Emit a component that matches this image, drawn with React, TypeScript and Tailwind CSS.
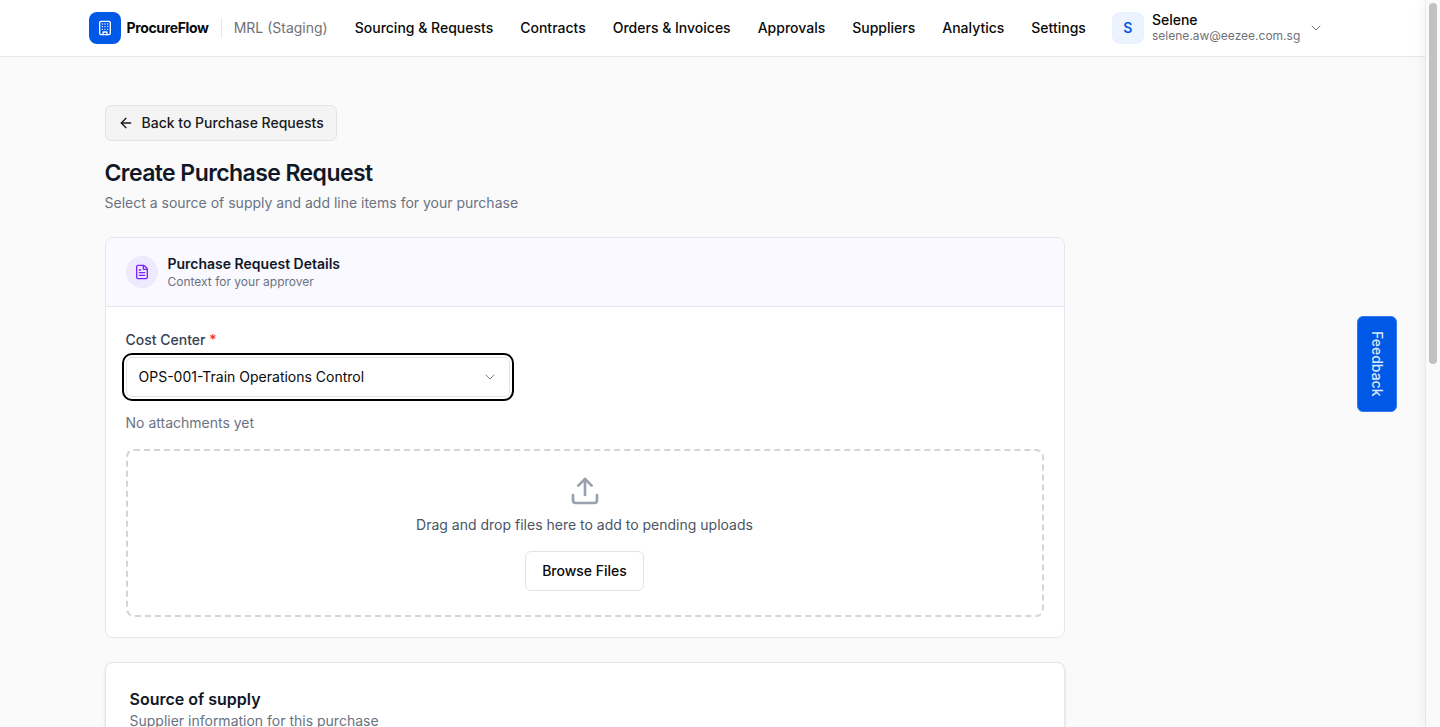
import { ArrowLeft, Building, ChevronDown, FileText, Upload } from 'lucide-react'

const navItems = [
  'Sourcing & Requests',
  'Contracts',
  'Orders & Invoices',
  'Approvals',
  'Suppliers',
  'Analytics',
  'Settings',
]

function Header() {
  return (
    <header className="shrink-0 bg-white border-b border-[#e1e7ef]">
      <div className="max-w-7xl mx-auto h-14 px-4 flex items-center whitespace-nowrap">
        <a href="#" className="flex items-center gap-1.5">
          <span className="w-8 h-8 rounded-lg bg-[#0058e6] flex items-center justify-center">
            <Building className="w-4 h-4 text-white" />
          </span>
          <span className="text-sm font-bold tracking-tight text-[#0a0a0a]">ProcureFlow</span>
        </a>
        <div className="ml-3 pl-3 h-5 border-l border-[#e1e7ef] flex items-center text-sm text-[#71717a]">
          MRL (Staging)
        </div>
        <nav className="ml-[27px] flex items-center gap-[27px]">
          {navItems.map((item) => (
            <a key={item} href="#" className="text-sm font-medium text-[#0a0a0a]">
              {item}
            </a>
          ))}
        </nav>
        <button type="button" className="ml-[26px] flex items-center gap-2 text-left">
          <span className="w-8 h-8 rounded-lg bg-[#ebf3ff] flex items-center justify-center text-sm font-semibold text-[#0058e6]">
            S
          </span>
          <span className="flex flex-col">
            <span className="text-sm leading-4 font-medium text-[#0a0a0a]">Selene</span>
            <span className="text-xs leading-4 text-[#71717a]">selene.aw@eezee.com.sg</span>
          </span>
          <ChevronDown strokeWidth={1.5} className="w-4 h-4 text-[#71717a]" />
        </button>
      </div>
    </header>
  )
}

function DetailsCard() {
  return (
    <section className="mt-6 rounded-lg border border-[#e1e7ef] bg-white overflow-hidden">
      <div className="px-5 py-4 flex items-center gap-2.5 bg-[#faf9ff] border-b border-[#e1e7ef]">
        <div className="w-8 h-8 rounded-full bg-violet-100 flex items-center justify-center">
          <FileText className="w-4 h-4 text-violet-600" />
        </div>
        <div>
          <h2 className="text-sm font-semibold text-gray-900">Purchase Request Details</h2>
          <p className="text-xs text-gray-500">Context for your approver</p>
        </div>
      </div>

      <div className="p-5">
        <label htmlFor="cost-center" className="block mb-1 text-sm leading-[26px] font-medium text-gray-700">
          Cost Center <span className="text-red-500">*</span>
        </label>
        <div className="grid max-w-sm items-center">
          <select
            id="cost-center"
            className="col-start-1 row-start-1 h-10 w-full appearance-none rounded-md border border-[#e4e4e7] bg-white px-3 text-sm text-[#0a0a0a] outline-2 outline-offset-2 outline-black"
          >
            <option>OPS-001-Train Operations Control</option>
          </select>
          <ChevronDown
            strokeWidth={1.5}
            className="col-start-1 row-start-1 justify-self-end mr-3 w-4 h-4 text-[#858585] pointer-events-none"
          />
        </div>

        <p className="mt-4 text-sm text-gray-500">No attachments yet</p>
        <div className="mt-4 p-6 rounded-lg border-2 border-dashed border-gray-300 flex flex-col items-center">
          <Upload className="w-8 h-8 text-gray-400" />
          <p className="mt-2 text-sm text-gray-600">Drag and drop files here to add to pending uploads</p>
          <button
            type="button"
            className="mt-4 h-10 px-4 rounded-md border border-[#e4e4e7] bg-white text-sm font-medium text-[#0a0a0a]"
          >
            Browse Files
          </button>
        </div>
      </div>
    </section>
  )
}

export default function App() {
  return (
    <div className="h-screen flex overflow-hidden bg-[#fafafa] font-['Inter',sans-serif]">
      <div className="flex-1 min-w-0 flex flex-col">
        <Header />
        <main className="flex-1 min-h-0 overflow-hidden">
          <div className="max-w-7xl mx-auto px-8 pt-12">
            <div className="max-w-[960px]">
              <button
                type="button"
                className="h-9 px-3 flex items-center gap-2 rounded-md border border-[#e4e4e7] bg-[#f4f4f4] text-sm font-medium text-[#18181b]"
              >
                <ArrowLeft className="w-4 h-4" />
                Back to Purchase Requests
              </button>
              <h1 className="mt-4 text-[23px] leading-8 font-semibold tracking-tight text-gray-900">
                Create Purchase Request
              </h1>
              <p className="mt-1 text-sm text-gray-500">Select a source of supply and add line items for your purchase</p>

              <DetailsCard />

              <section className="mt-6 p-6 rounded-lg border border-[#e1e7ef] bg-white shadow-sm">
                <h2 className="text-base font-semibold text-gray-900">Source of supply</h2>
                <p className="text-sm text-gray-500">Supplier information for this purchase</p>
              </section>
            </div>
          </div>
        </main>
      </div>

      {/* Scrollbar, with the edge shadow of the closed side panel */}
      <div className="w-[15px] shrink-0 border-l border-[#e8e8e8] bg-[#fafafa] px-[3px] py-[3px] shadow-[0_0_14px_rgba(0,0,0,0.07)]">
        <div className="w-2 h-1/2 rounded-full bg-[#c1c1c1]" />
      </div>

      <button
        type="button"
        className="fixed right-[43px] top-1/2 -translate-y-1/2 w-10 h-24 flex items-center justify-center rounded-md border border-[#3379eb] bg-[#0058e6] text-sm font-medium text-[#dbe8fc]"
      >
        <span className="[writing-mode:vertical-rl]">Feedback</span>
      </button>
    </div>
  )
}
